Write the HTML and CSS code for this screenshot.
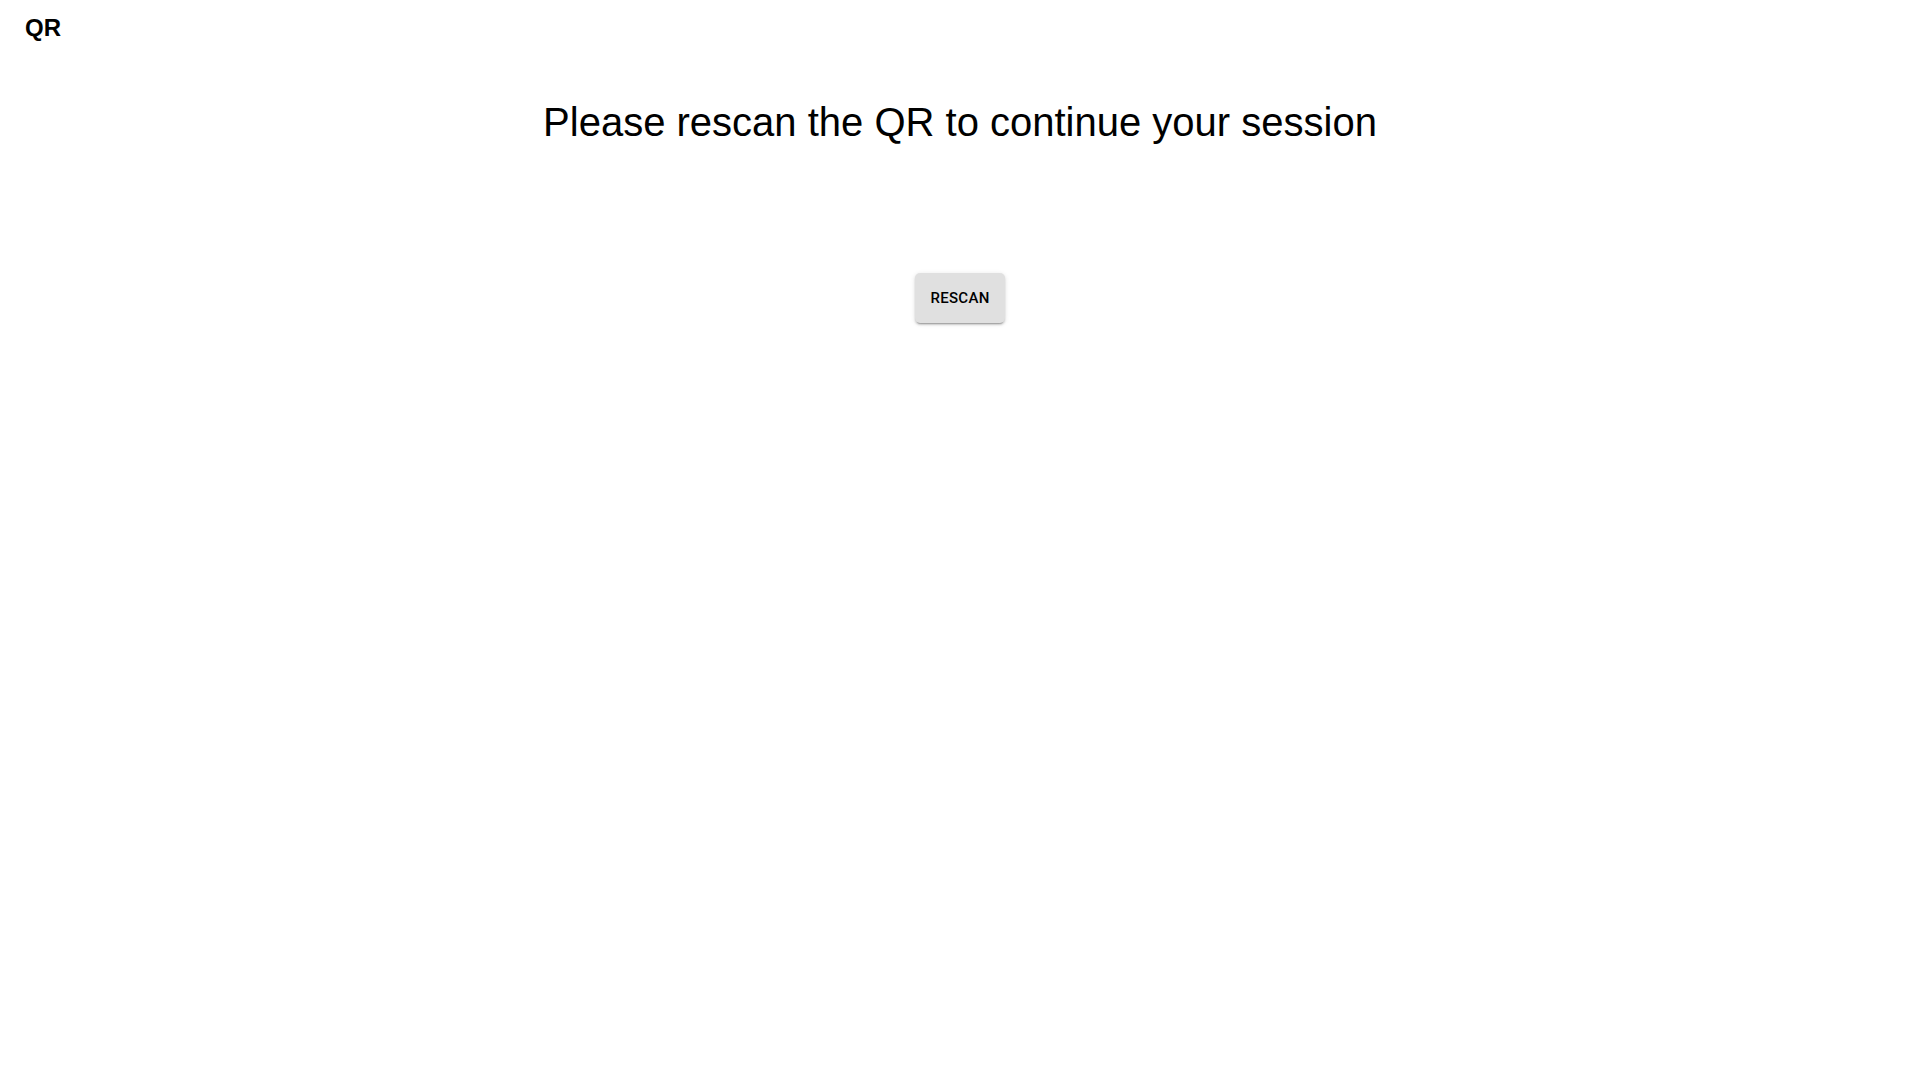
FILE: index.html
```html
<!DOCTYPE html>
<html>
<head>
<meta charset="utf-8">
<link rel="stylesheet" href="styles.css">
</head>
<body>
<header class="topbar"><span class="brand">QR</span></header>
<main class="content">
  <h1 class="title">Please rescan the QR to continue your session</h1>
  <button class="rescan">RESCAN</button>
</main>
</body>
</html>
```
FILE: styles.css
```css
html, body { margin: 0; padding: 0; background: #fff; }
body { font-family: "Liberation Sans", Arial, sans-serif; color: #000; width: 1920px; height: 1080px; }
.topbar { padding: 16px 25px 0; height: 30px; }
.brand { font-weight: bold; font-size: 24px; line-height: 24px; display: block; }
.content { display: flex; flex-direction: column; align-items: center; }
.title { font-weight: normal; font-size: 40px; line-height: 44px; margin: 54px 0 0; }
.rescan {
  margin-top: 129px;
  width: 90px; height: 50px;
  border: none; border-radius: 5px;
  background: #e0e0e0;
  font-family: Roboto, sans-serif; font-weight: 500; font-size: 15px;
  letter-spacing: 0.3px; color: #000;
  box-shadow: 0 3px 1px -2px rgba(0,0,0,0.2), 0 2px 2px 0 rgba(0,0,0,0.14), 0 1px 5px 0 rgba(0,0,0,0.12);
}
```
